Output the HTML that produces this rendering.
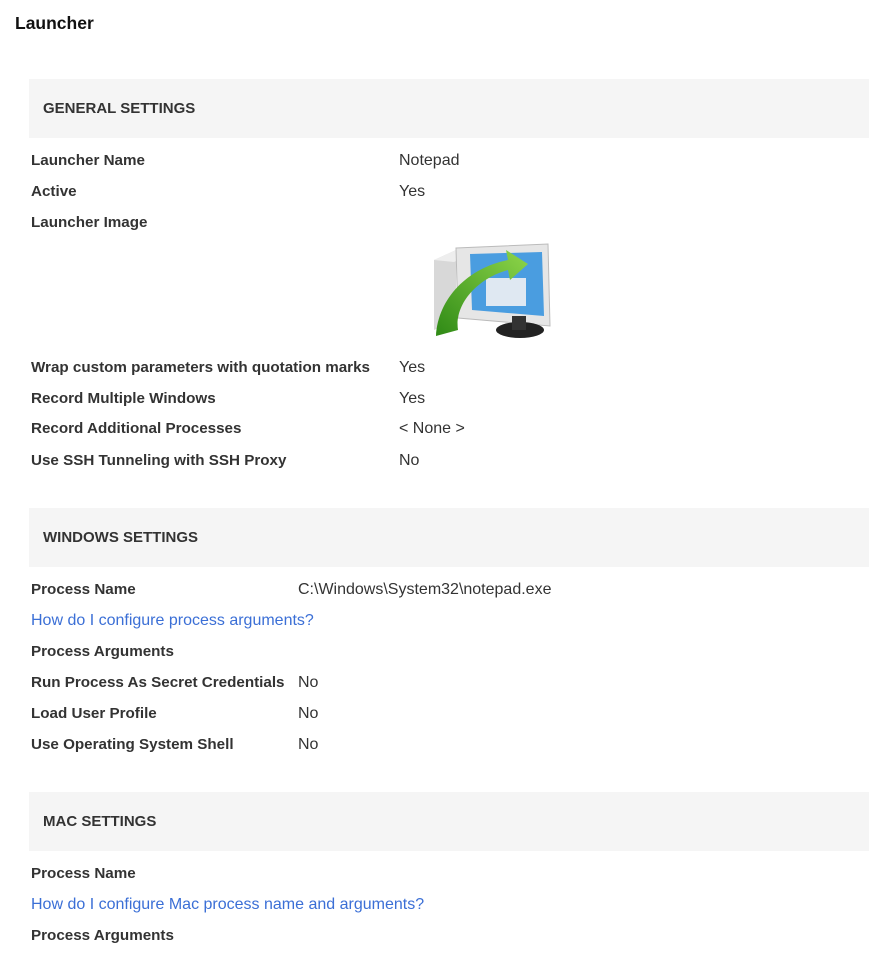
<!DOCTYPE html>
<html><head><meta charset="utf-8"><style>
body{margin:0;width:869px;height:969px;background:#fff;font-family:"Liberation Sans",Arial,sans-serif;color:#333;position:relative;overflow:hidden}
.t{position:absolute;font-size:16px;line-height:18px;white-space:nowrap;margin-top:1px}
.b{font-weight:bold;font-size:15.2px}
.h{position:absolute;left:29px;width:840px;height:59px;background:#f5f5f5}
.h span{position:absolute;left:14px;top:21px;font-size:15px;font-weight:bold;color:#333}
a{color:#3b6fd6;text-decoration:none}
</style></head><body>
<div class="t b" style="left:15px;top:13px;font-size:17.5px;color:#111">Launcher</div>

<div class="h" style="top:79px"><span>GENERAL SETTINGS</span></div>
<div class="t b" style="left:31px;top:151px">Launcher Name</div><div class="t" style="left:399px;top:151px">Notepad</div>
<div class="t b" style="left:31px;top:182px">Active</div><div class="t" style="left:399px;top:182px">Yes</div>
<div class="t b" style="left:31px;top:213px">Launcher Image</div>
<svg style="position:absolute;left:428px;top:238px" width="124" height="108" viewBox="0 0 124 108">
<defs><linearGradient id="g" x1="0" y1="1" x2="1" y2="0"><stop offset="0" stop-color="#2f8a16"/><stop offset="1" stop-color="#8fd64a"/></linearGradient></defs>
<polygon points="6,22 28,12 28,82 6,92" fill="#d8d8d8"/><polygon points="6,22 28,12 48,14 26,24" fill="#eee"/>
<polygon points="28,10 120,6 122,88 30,80" fill="#e6e6e6" stroke="#bbb"/>
<polygon points="42,16 114,14 116,78 44,72" fill="#4a9de0"/>
<rect x="58" y="40" width="40" height="28" fill="#dfe8f2"/>
<ellipse cx="92" cy="92" rx="24" ry="8" fill="#222"/><rect x="84" y="78" width="14" height="14" fill="#333"/>
<path d="M8,98 C10,60 40,30 80,22 L78,12 L100,26 L82,42 L80,32 C50,40 26,66 30,92 Z" fill="url(#g)"/>
</svg>
<div class="t b" style="left:31px;top:358px">Wrap custom parameters with quotation marks</div><div class="t" style="left:399px;top:358px">Yes</div>
<div class="t b" style="left:31px;top:389px">Record Multiple Windows</div><div class="t" style="left:399px;top:389px">Yes</div>
<div class="t b" style="left:31px;top:419px">Record Additional Processes</div><div class="t" style="left:399px;top:419px">&lt; None &gt;</div>
<div class="t b" style="left:31px;top:451px">Use SSH Tunneling with SSH Proxy</div><div class="t" style="left:399px;top:451px">No</div>

<div class="h" style="top:508px"><span>WINDOWS SETTINGS</span></div>
<div class="t b" style="left:31px;top:580px">Process Name</div><div class="t" style="left:298px;top:580px">C:\Windows\System32\notepad.exe</div>
<div class="t" style="left:31px;top:611px"><a>How do I configure process arguments?</a></div>
<div class="t b" style="left:31px;top:642px">Process Arguments</div>
<div class="t b" style="left:31px;top:673px">Run Process As Secret Credentials</div><div class="t" style="left:298px;top:673px">No</div>
<div class="t b" style="left:31px;top:704px">Load User Profile</div><div class="t" style="left:298px;top:704px">No</div>
<div class="t b" style="left:31px;top:735px">Use Operating System Shell</div><div class="t" style="left:298px;top:735px">No</div>

<div class="h" style="top:792px"><span>MAC SETTINGS</span></div>
<div class="t b" style="left:31px;top:864px">Process Name</div>
<div class="t" style="left:31px;top:895px"><a>How do I configure Mac process name and arguments?</a></div>
<div class="t b" style="left:31px;top:926px">Process Arguments</div>
</body></html>
